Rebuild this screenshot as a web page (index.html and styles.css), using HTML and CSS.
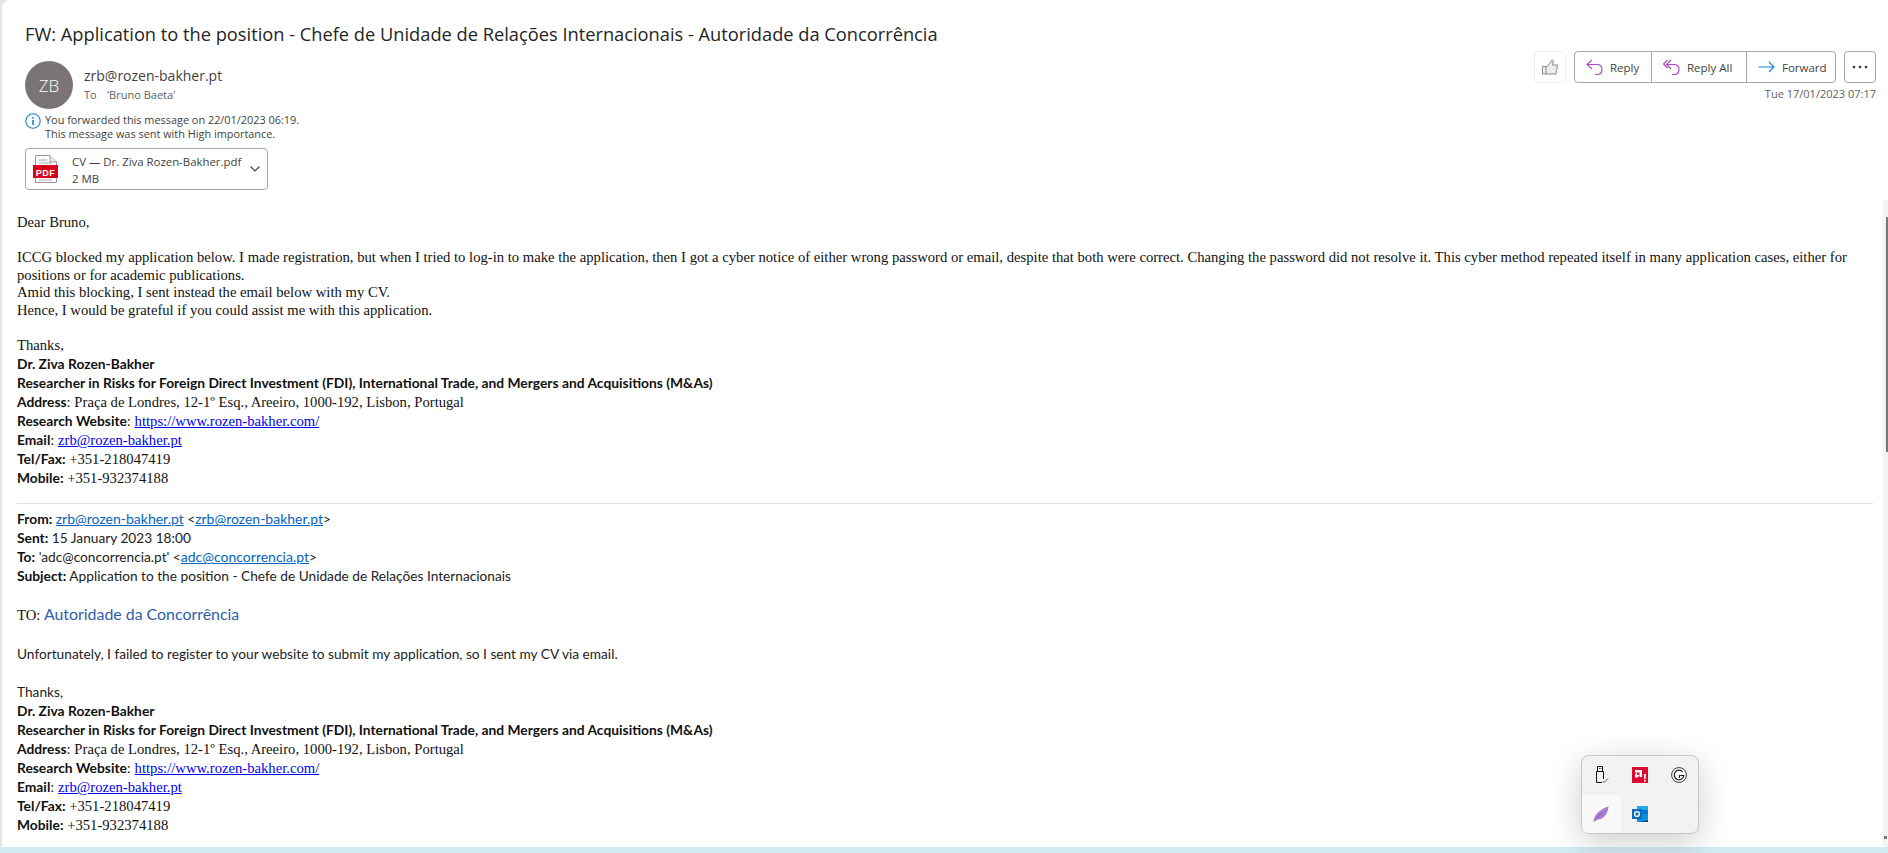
FILE: index.html
```html
<!DOCTYPE html>
<html>
<head>
	<title>FW: Application to the position</title>
	<meta http-equiv="Content-Type" content="text/html;charset=utf-8">
	<link rel="stylesheet" href="styles.css">
</head>
<body>
	<div class="pane">
		<div class="head">
			<h1 class="subject">FW: Application to the position - Chefe de Unidade de Relações Internacionais - Autoridade da Concorrência</h1>
			<div class="meta">
				<div class="meta-left">
					<div class="sender">
						<div class="avatar">ZB</div>
						<div>
							<div class="from">zrb@rozen-bakher.pt</div>
							<div class="to"><span class="to-label">To</span>'Bruno Baeta'</div>
						</div>
					</div>
					<div class="info">
						<svg class="info-icon" width="16" height="16" viewBox="0 0 16 16"><circle cx="8" cy="8" r="7.2" fill="none" stroke="#1a86d0" stroke-width="1.1"/><rect x="7.2" y="7" width="1.6" height="5" fill="#1a86d0"/><rect x="7.2" y="4" width="1.6" height="1.7" fill="#1a86d0"/></svg>
						<div>You forwarded this message on 22/01/2023 06:19.<br>This message was sent with High importance.</div>
					</div>
					<div class="attach">
						<svg class="pdf" width="28" height="30" viewBox="0 0 28 30"><path d="M3.5 1.5H18L24.5 8V28.5H3.5Z" fill="#fff" stroke="#9a9a9a"/><path d="M18 1.5V8H24.5" fill="#e8e8e8" stroke="#9a9a9a"/><path d="M7 6H15M7 9H20M7 12H20M7 26H20" stroke="#a8a8a8"/><rect x="1" y="11" width="25" height="13" fill="#d9021d"/><text x="13.5" y="21.5" class="pdf-label" text-anchor="middle">PDF</text></svg>
						<div class="attach-text">
							<div>CV — Dr. Ziva Rozen-Bakher.pdf</div>
							<div>2 MB</div>
						</div>
						<svg class="chevron" width="10" height="6" viewBox="0 0 10 6"><path d="M.5.5 5 5 9.5.5" fill="none" stroke="#444" stroke-width="1.2"/></svg>
					</div>
				</div>
				<div class="meta-right">
					<div class="actions">
						<button class="btn like"><svg width="16" height="16" viewBox="0 0 16 16"><path d="M.5 7.5H4V15H.5ZM4 8 7.5 5 10 1 11.5 2 10.5 6H15.5L14 15H4" fill="#ececec" stroke="#8a8a8a"/></svg></button>
						<div class="group">
							<button class="btn-item"><svg width="17" height="16" viewBox="0 0 17 16"><path d="M6 1 1 5.5 6 10M1 5.5H11C14 5.5 16 7.5 16 10.5S14 15.5 11 15.5H9" fill="none" stroke="#b146c2" stroke-width="1.1"/></svg>Reply</button>
							<button class="btn-item"><svg width="17" height="16" viewBox="0 0 17 16"><path d="M4.5 1 .5 5 4.5 9M8 1 3.5 5.5 8 10M3.5 5.5H11C14 5.5 16 7.5 16 10.5S14 15.5 11 15.5H9" fill="none" stroke="#b146c2" stroke-width="1.1"/></svg>Reply All</button>
							<button class="btn-item"><svg width="17" height="16" viewBox="0 0 17 16"><path d="M11 3 16 8 11 13M.5 8H16" fill="none" stroke="#1a86d0" stroke-width="1.1"/></svg>Forward</button>
						</div>
						<button class="btn more"><svg width="16" height="4" viewBox="0 0 16 4"><circle cx="2" cy="2" r="1.3"/><circle cx="8" cy="2" r="1.3"/><circle cx="14" cy="2" r="1.3"/></svg></button>
					</div>
					<div class="date">Tue 17/01/2023 07:17</div>
				</div>
			</div>
		</div>

		<div class="mail">
			<p class="serif">Dear Bruno,</p>
			<p class="serif">&nbsp;</p>
			<p class="serif">ICCG blocked my application below. I made registration, but when I tried to log-in to make the application, then I got a cyber notice of either wrong password or email, despite that both were correct. Changing the password did not resolve it. This cyber method repeated itself in many application cases, either for positions or for academic publications.</p>
			<p class="serif">Amid this blocking, I sent instead the email below with my CV.</p>
			<p class="serif">Hence, I would be grateful if you could assist me with this application.</p>
			<p class="serif">&nbsp;</p>
			<p class="serif">Thanks,</p>
			<p class="line"><b>Dr. Ziva Rozen-Bakher</b></p>
			<p class="line"><b>Researcher in Risks for Foreign Direct Investment (FDI), International Trade, and Mergers and Acquisitions (M&amp;As)</b></p>
			<p class="line"><b>Address</b><span class="tms">: Praça de Londres, 12-1º Esq., Areeiro, 1000-192, Lisbon, Portugal</span></p>
			<p class="line"><b>Research Website</b><span class="tms">: <a class="blue" href="#">https://www.rozen-bakher.com/</a></span></p>
			<p class="line"><b>Email</b><span class="tms">: <a class="blue" href="#">zrb@rozen-bakher.pt</a></span></p>
			<p class="line"><b>Tel/Fax:</b><span class="tms"> +351-218047419</span></p>
			<p class="line"><b>Mobile:</b><span class="tms"> +351-932374188</span></p>

			<div class="fwd">
				<p class="line"><b>From:</b> <a href="#">zrb@rozen-bakher.pt</a> &lt;<a href="#">zrb@rozen-bakher.pt</a>&gt;</p>
				<p class="line"><b>Sent:</b> 15 January 2023 18:00</p>
				<p class="line"><b>To:</b> 'adc@concorrencia.pt' &lt;<a href="#">adc@concorrencia.pt</a>&gt;</p>
				<p class="line"><b>Subject:</b> Application to the position - Chefe de Unidade de Relações Internacionais</p>
			</div>

			<p class="org"><span class="tms">TO:</span> <span class="org-name">Autoridade da Concorrência</span></p>
			<p class="line">Unfortunately, I failed to register to your website to submit my application, so I sent my CV via email.</p>
			<p class="line">&nbsp;</p>
			<p class="line">Thanks,</p>
			<p class="line"><b>Dr. Ziva Rozen-Bakher</b></p>
			<p class="line"><b>Researcher in Risks for Foreign Direct Investment (FDI), International Trade, and Mergers and Acquisitions (M&amp;As)</b></p>
			<p class="line"><b>Address</b><span class="tms">: Praça de Londres, 12-1º Esq., Areeiro, 1000-192, Lisbon, Portugal</span></p>
			<p class="line"><b>Research Website</b><span class="tms">: <a class="blue" href="#">https://www.rozen-bakher.com/</a></span></p>
			<p class="line"><b>Email</b><span class="tms">: <a class="blue" href="#">zrb@rozen-bakher.pt</a></span></p>
			<p class="line"><b>Tel/Fax:</b><span class="tms"> +351-218047419</span></p>
			<p class="line"><b>Mobile:</b><span class="tms"> +351-932374188</span></p>
		</div>

		<div class="scrollbar">
			<div class="thumb"></div>
			<div class="arrow"></div>
		</div>
	</div>
	<div class="strip"></div>

	<div class="tray">
		<div class="cell"><svg width="16" height="18" viewBox="0 0 16 18"><path d="M3.5 5.5V16.5H9M10.5 13V5.5H3.5M4.5 5.5V.5H9.5V5.5M6 2.5H6.8M7.5 2.5H8.3" fill="none" stroke="#111"/><path d="M9.5 15 11 16.5 15 12.5" fill="none" stroke="#555"/></svg></div>
		<div class="cell"><svg width="16" height="16" viewBox="0 0 16 16"><rect width="16" height="16" fill="#dc0a32"/><path d="M3 3H10V10H7.5V5.5H3ZM3 7.5 5 5.5V8H7.5L5.5 10.5H3Z" fill="#fff"/><rect x="12" y="7" width="1.7" height="5" fill="#fff"/><rect x="12" y="13" width="1.7" height="1.7" fill="#fff"/></svg></div>
		<div class="cell"><svg width="16" height="16" viewBox="0 0 16 16"><circle cx="8" cy="8" r="7.4" fill="#fff" stroke="#222" stroke-width=".9"/><path d="M11.8 5A4.8 4.8 0 1 0 12.8 8.5H8.5V11" fill="none" stroke="#222" stroke-width="1.2"/></svg></div>
		<div class="cell cell-on"><svg width="16" height="16" viewBox="0 0 16 16"><path d="M.5 15.5C1 9 7 3 15.5.5 15 7 11 14 4 13.5 3 14 2 15 1 15.8Z" fill="#a77dd4"/><path d="M1.5 15 10 6" stroke="#7d4fb0" stroke-width=".8"/></svg></div>
		<div class="cell"><svg width="16" height="16" viewBox="0 0 16 16"><rect x="5" width="11" height="8" fill="#28a8ea"/><rect x="5" y="4" width="11" height="4" fill="#0078d4"/><path d="M5 8H16V16H5Z" fill="#14447d"/><path d="M5 8 16 8 16 14 8 16H5Z" fill="#0f8fdd"/><rect y="3" width="10" height="10" fill="#0f6cbd"/><circle cx="5" cy="8" r="2.4" fill="none" stroke="#fff" stroke-width="1.4"/></svg></div>
	</div>
</body>
</html>
```

FILE: styles.css
```css
*{box-sizing:border-box}
html,body{height:100%}
body{margin:0;background:#e6e6e6;overflow:hidden;display:flex;flex-direction:column;font-family:"Open Sans","Noto Sans",sans-serif;color:#242424}
p{margin:0}
a{color:#0563c1}
button{font-family:inherit;background:none;cursor:pointer}

.pane{flex:1;min-height:0;margin-left:2px;background:#fff;border-top-left-radius:8px;display:flex;flex-direction:column;position:relative;overflow:hidden}
.strip{height:6px;background:#d3e9f3}

.head{padding:0 12px 0 23px;height:214px;flex:none}
.subject{margin:0;padding-top:22px;font-size:18.25px;font-weight:400;line-height:24px;color:#242424}
.meta{display:flex;justify-content:space-between}
.meta-left{padding-top:15px}
.sender{display:flex;gap:11px}
.avatar{width:48px;height:48px;border-radius:50%;background:#7a7574;color:#fff;display:flex;align-items:center;justify-content:center;font-size:17px;font-weight:300}
.from{font-size:14px;line-height:20px;padding-top:5px;color:#424242}
.to{font-size:11px;line-height:18px;color:#616161}
.to-label{margin-right:10px}
.info{display:flex;gap:4px;font-size:10.9px;line-height:14px;color:#424242;margin-top:4px}
.info-icon{flex:none}
.attach{margin-top:7px;width:243px;height:42px;border:1px solid #a8a8a8;border-radius:4px;display:flex;align-items:center;padding-left:6px;color:#424242}
.pdf{flex:none}
.pdf-label{font-family:"Liberation Sans",sans-serif;font-size:9px;font-weight:700;fill:#fff;letter-spacing:.5px}
.attach-text{flex:1;font-size:11.4px;line-height:17px;padding:2px 0 0 12px}
.chevron{margin-right:7px}

.meta-right{display:flex;flex-direction:column;align-items:flex-end;margin-top:5px}
.actions{display:flex;gap:8px;height:32px}
.btn{width:32px;height:32px;padding:0;border:1px solid #a8a8a8;border-radius:4px;display:flex;align-items:center;justify-content:center}
.like{border-color:#eee}
.more svg{fill:#333}
.group{display:flex;border:1px solid #a8a8a8;border-radius:4px;width:262px}
.btn-item{border:0;border-right:1px solid #a8a8a8;padding:0 0 0 11px;font-size:11.5px;color:#424242;display:flex;align-items:center;gap:7px;width:95px}
.btn-item:first-child{width:77px}
.btn-item:last-child{border-right:0;width:auto;flex:1}
.date{font-size:11px;line-height:16px;color:#616161;margin-top:3px}

.mail{padding:0 15px;font-family:Lato,"Open Sans",sans-serif;font-size:13.7px}
.serif,.tms{font-family:"Liberation Serif",serif;font-size:14.667px;color:#111}
.serif{line-height:17.5px}
.line{line-height:19px;color:#222}
.line b{color:#111;font-size:13.82px}
.line .tms{line-height:1}
.blue{color:#00e}
.fwd{border-top:1px solid #e1e1e1;margin-top:16px;padding-top:5px}
.fwd a{font-size:14px}
.org{margin:19px 0 0;line-height:20px;font-size:15.9px;color:#222}
.org .tms{line-height:1}
.org-name{color:#2f5eaa}
.org + .line{margin-top:20px}

.scrollbar{position:absolute;right:0;top:199px;bottom:0;width:5px;background:#f3f3f3;border-radius:4px 0 0 4px}
.thumb{position:absolute;right:0;top:18px;height:235px;width:2px;background:#777}
.arrow{position:absolute;right:1px;bottom:8px;width:3px;height:3px;background:#777}

.tray{position:absolute;left:1581px;top:755px;width:118px;height:79px;background:#f2f2f2;border:1px solid #c6c6c6;border-radius:8px;box-shadow:0 8px 32px rgba(0,0,0,.2);display:grid;grid-template-columns:repeat(3,1fr);grid-template-rows:1fr 1fr;overflow:hidden}
.cell{display:flex;align-items:center;justify-content:center}
.cell-on{background:#f9f9f9}
```
